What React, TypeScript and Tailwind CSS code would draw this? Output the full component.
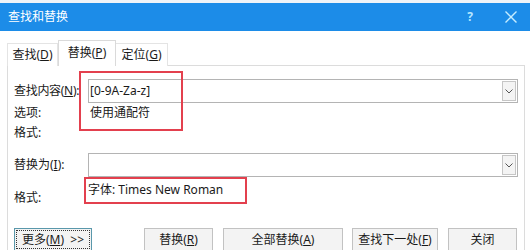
import React from "react";

const font = { fontFamily: '"Noto Sans", "Noto Sans CJK SC", sans-serif' };

function Chevron() {
  return (
    <svg width="8" height="5" viewBox="0 0 8 5" fill="none">
      <path d="M0.5 0.5 L4 4 L7.5 0.5" stroke="#555" strokeWidth="1" />
    </svg>
  );
}

function Combo({ value }: { value?: string }) {
  return (
    <div className="flex h-[24px] w-[430px] shrink-0 border border-[#b4b4b4] bg-white">
      <div className="flex flex-1 items-center pl-[1px] text-[12px] leading-[16px] text-[#1a1a1a]">{value}</div>
      <div className="my-[1px] mr-[1px] flex w-[14px] items-center justify-center border border-[#c6c6c6] bg-[#f4f4f4]">
        <Chevron />
      </div>
    </div>
  );
}

function Btn({ w, children, focus }: { w: string; children: React.ReactNode; focus?: boolean }) {
  return (
    <div
      className={
        "flex h-[23px] items-center justify-center whitespace-nowrap border bg-[#f3f3f3] text-[12px] leading-[16px] text-[#1a1a1a] " +
        w +
        (focus ? " border-[#5a98ab]" : " border-[#c2c2c2]")
      }
    >
      {focus ? (
        <div className="flex h-[19px] w-[74px] items-center justify-center border border-dotted border-[#333]">
          {children}
        </div>
      ) : (
        children
      )}
    </div>
  );
}

export default function App() {
  return (
    <div className="relative h-[250px] w-[530px] overflow-hidden bg-white" style={font}>
      <div className="h-[3px] bg-[#eef3f8]" />
      <div className="flex h-[28px] items-center bg-[#1c8ce8] pl-[8px] text-[12px] leading-[16px] text-white">
        <span className="flex-1">查找和替换</span>
        <span className="mr-[32px] text-[12px] font-bold text-[#b7e7ff]">?</span>
        <svg width="12" height="12" viewBox="0 0 12 12" className="mr-[13px]">
          <path d="M0.5 0.5 L11.5 11.5 M11.5 0.5 L0.5 11.5" stroke="#c6edff" strokeWidth="1.4" />
        </svg>
      </div>

      <div className="px-[7px] pt-[9px]">
        <div className="relative z-10 -mb-[1px] flex items-end whitespace-nowrap text-[12px] leading-[16px] text-[#1a1a1a]">
          <div className="flex h-[23px] w-[51px] items-center justify-center border border-b-0 border-[#e4e4e4] bg-white">
            查找(<u>D</u>)
          </div>
          <div className="flex h-[26px] w-[58px] items-center justify-center border border-b-0 border-[#dadada] bg-white pb-[2px]">
            替换(<u>P</u>)
          </div>
          <div className="flex h-[23px] w-[52px] items-center justify-center border border-b-0 border-l-0 border-[#e4e4e4] bg-white">
            定位(<u>G</u>)
          </div>
        </div>

        <div className="h-[200px] w-[518px] whitespace-nowrap border border-[#dcdcdc] pl-[6px] pt-[13px] text-[12px] leading-[16px] text-[#1a1a1a]">
          <div className="flex h-[24px] items-center">
            <div className="w-[74px] shrink-0 tracking-[-0.3px]">
              查找内容(<u>N</u>):
            </div>
            <Combo value="[0-9A-Za-z]" />
          </div>
          <div className="flex h-[20px] items-center">
            <div className="w-[74px] shrink-0">选项:</div>
            <div className="pl-[2px]">使用通配符</div>
          </div>
          <div className="flex h-[20px] items-center">
            <div className="w-[74px] shrink-0">格式:</div>
          </div>
          <div className="mt-[10px] flex h-[24px] items-center">
            <div className="w-[74px] shrink-0">
              替换为(<u>I</u>):
            </div>
            <Combo />
          </div>
          <div className="flex h-[33px] items-start">
            <div className="w-[74px] shrink-0 pt-[13px]">格式:</div>
            <div className="pt-[5px]">字体: Times New Roman</div>
          </div>
          <div className="mt-[18px] flex items-start">
            <Btn w="w-[78px]" focus>
              <span>
                更多(<u>M</u>)&nbsp;&nbsp;&gt;&gt;
              </span>
            </Btn>
            <div className="ml-[52px]">
              <Btn w="w-[69px]">
                <span>
                  替换(<u>R</u>)
                </span>
              </Btn>
            </div>
            <div className="ml-[10px]">
              <Btn w="w-[120px]">
                <span>
                  全部替换(<u>A</u>)
                </span>
              </Btn>
            </div>
            <div className="ml-[9px]">
              <Btn w="w-[86px]">
                <span>
                  查找下一处(<u>F</u>)
                </span>
              </Btn>
            </div>
            <div className="ml-[10px]">
              <Btn w="w-[69px]">
                <span>关闭</span>
              </Btn>
            </div>
          </div>
        </div>
      </div>

      <div className="absolute left-[79px] top-[71px] h-[60px] w-[104px] border-2 border-[#e3404e]" />
      <div className="absolute left-[84px] top-[177px] h-[27px] w-[163px] border-2 border-[#e3404e]" />
    </div>
  );
}
